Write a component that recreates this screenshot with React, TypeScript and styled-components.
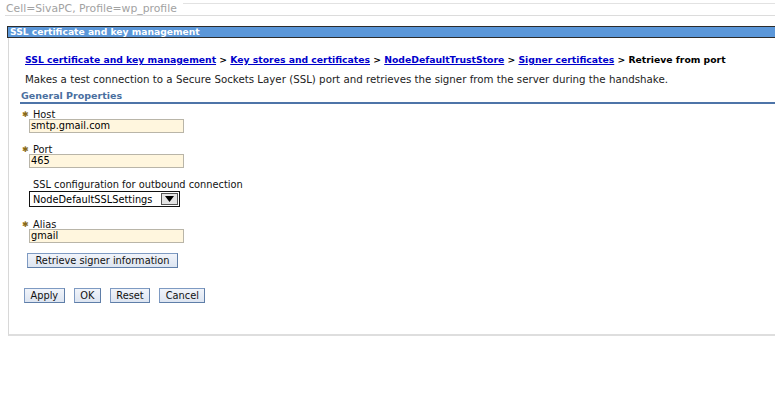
import styled, { createGlobalStyle } from 'styled-components';

const GlobalStyle = createGlobalStyle`
  html, body {
    margin: 0;
    padding: 0;
    background: #fff;
  }
  body {
    font-family: "DejaVu Sans", Verdana, sans-serif;
    font-size: 10px;
    color: #000;
  }
  * {
    box-sizing: border-box;
  }
`;

const Page = styled.div`
  width: 780px;
  height: 393px;
  overflow: hidden;
`;

const CellRow = styled.div`
  display: flex;
  align-items: flex-start;
  margin: 0 5px 0 5px;
  height: 16px;
  border-bottom: 1px solid #dcdcdc;
`;

const CellText = styled.span`
  padding: 2px 0 0 1px;
  font-size: 10.8px;
  color: #a2a2a2;
  white-space: nowrap;
`;

const CellFiller = styled.div`
  flex: 1;
  margin-top: 3px;
  margin-left: 6px;
  border-top: 1px solid #e2e2e2;
`;

const TitleBar = styled.div`
  margin: 10px 5px 0 7px;
  height: 12px;
  line-height: 10px;
  padding: 0 2px;
  background: #5b97d9;
  border: 1px solid #2c2c2c;
  border-right: none;
  color: #fff;
  font-weight: bold;
  font-size: 9.2px;
`;

const Panel = styled.div`
  margin: 0 5px 0 8px;
  height: 298px;
  border-left: 1px solid #d8d8d8;
  border-bottom: 2px solid #dedede;
  padding: 16px 0 0 11px;
`;

const Crumbs = styled.div`
  padding-left: 5px;
  font-weight: bold;
  font-size: 9.25px;
  white-space: nowrap;
`;

const CrumbLink = styled.a`
  color: #0000cc;
  text-decoration: underline;
`;

const Description = styled.p`
  margin: 8px 0 0 5px;
  font-size: 10.25px;
  color: #222;
  white-space: nowrap;
`;

const SectionTitle = styled.div`
  margin-top: 5px;
  padding: 0 0 1px 1px;
  border-bottom: 2px solid #4d74a8;
  color: #4a6fa0;
  font-weight: bold;
  font-size: 9.5px;
`;

const Form = styled.div`
  display: flex;
  flex-direction: column;
  padding: 5px 0 0 2px;
`;

const Field = styled.div<{ $gap: number }>`
  display: flex;
  flex-direction: column;
  margin-bottom: ${(p) => p.$gap}px;
`;

const Label = styled.label`
  display: flex;
  align-items: center;
  height: 10px;
  font-size: 9.8px;
  color: #111;
`;

const Star = styled.span<{ $show: boolean }>`
  width: 9px;
  margin-right: 2px;
  color: #8a6a16;
  font-size: 8px;
  visibility: ${(p) => (p.$show ? 'visible' : 'hidden')};
`;

const TextBox = styled.div`
  margin-left: 7px;
  width: 155px;
  height: 14px;
  line-height: 12px;
  padding-left: 1px;
  background: #fff6de;
  border: 1px solid #b9b5a8;
  font-size: 9.8px;
  color: #000;
`;

const Select = styled.div`
  display: flex;
  align-items: center;
  justify-content: space-between;
  margin: 2px 0 0 7px;
  width: 151px;
  height: 16px;
  padding-left: 3px;
  border: 1px solid #111;
  font-size: 9.8px;
`;

const SelectArrow = styled.span`
  display: flex;
  align-items: center;
  justify-content: center;
  width: 17px;
  height: 12px;
  margin-right: 1px;
  background: #e4e4e4;
  border: 1px solid #555;
`;

const Button = styled.button<{ $pad?: number }>`
  height: 15px;
  padding: 0 ${(p) => p.$pad ?? 5.5}px;
  font-family: "DejaVu Sans", Verdana, sans-serif;
  font-size: 9.8px;
  color: #111;
  background: linear-gradient(#f1f4fa, #dde5f1);
  border: 1px solid #7e9ac2;
  border-right-color: #5f7ea8;
  border-bottom-color: #5f7ea8;
  cursor: pointer;
`;

const RetrieveRow = styled.div`
  padding-left: 5px;
`;

const ButtonRow = styled.div`
  display: flex;
  gap: 9px;
  margin-top: 20px;
  padding-left: 2px;
`;

const crumbs = [
  'SSL certificate and key management',
  'Key stores and certificates',
  'NodeDefaultTrustStore',
  'Signer certificates',
];

const fields = [
  { label: 'Host', value: 'smtp.gmail.com' },
  { label: 'Port', value: '465' },
];

export default function App() {
  return (
    <Page>
      <GlobalStyle />
      <CellRow>
        <CellText>Cell=SivaPC, Profile=wp_profile</CellText>
        <CellFiller />
      </CellRow>
      <TitleBar>SSL certificate and key management</TitleBar>
      <Panel>
        <Crumbs>
          {crumbs.map((c) => (
            <span key={c}>
              <CrumbLink href="#">{c}</CrumbLink>
              {' > '}
            </span>
          ))}
          Retrieve from port
        </Crumbs>
        <Description>
          Makes a test connection to a Secure Sockets Layer (SSL) port and retrieves the signer from the server during the handshake.
        </Description>
        <SectionTitle>General Properties</SectionTitle>
        <Form>
          {fields.map((f) => (
            <Field key={f.label} $gap={11}>
              <Label>
                <Star $show>✱</Star>
                {f.label}
              </Label>
              <TextBox>{f.value}</TextBox>
            </Field>
          ))}
          <Field $gap={12}>
            <Label>
              <Star $show={false}>✱</Star>
              SSL configuration for outbound connection
            </Label>
            <Select>
              NodeDefaultSSLSettings
              <SelectArrow>
                <svg width="9" height="6" viewBox="0 0 9 6">
                  <path d="M0 0h9L4.5 6z" fill="#000" />
                </svg>
              </SelectArrow>
            </Select>
          </Field>
          <Field $gap={10}>
            <Label>
              <Star $show>✱</Star>
              Alias
            </Label>
            <TextBox>gmail</TextBox>
          </Field>
          <RetrieveRow>
            <Button $pad={7.5}>Retrieve signer information</Button>
          </RetrieveRow>
          <ButtonRow>
            <Button>Apply</Button>
            <Button>OK</Button>
            <Button>Reset</Button>
            <Button>Cancel</Button>
          </ButtonRow>
        </Form>
      </Panel>
    </Page>
  );
}
